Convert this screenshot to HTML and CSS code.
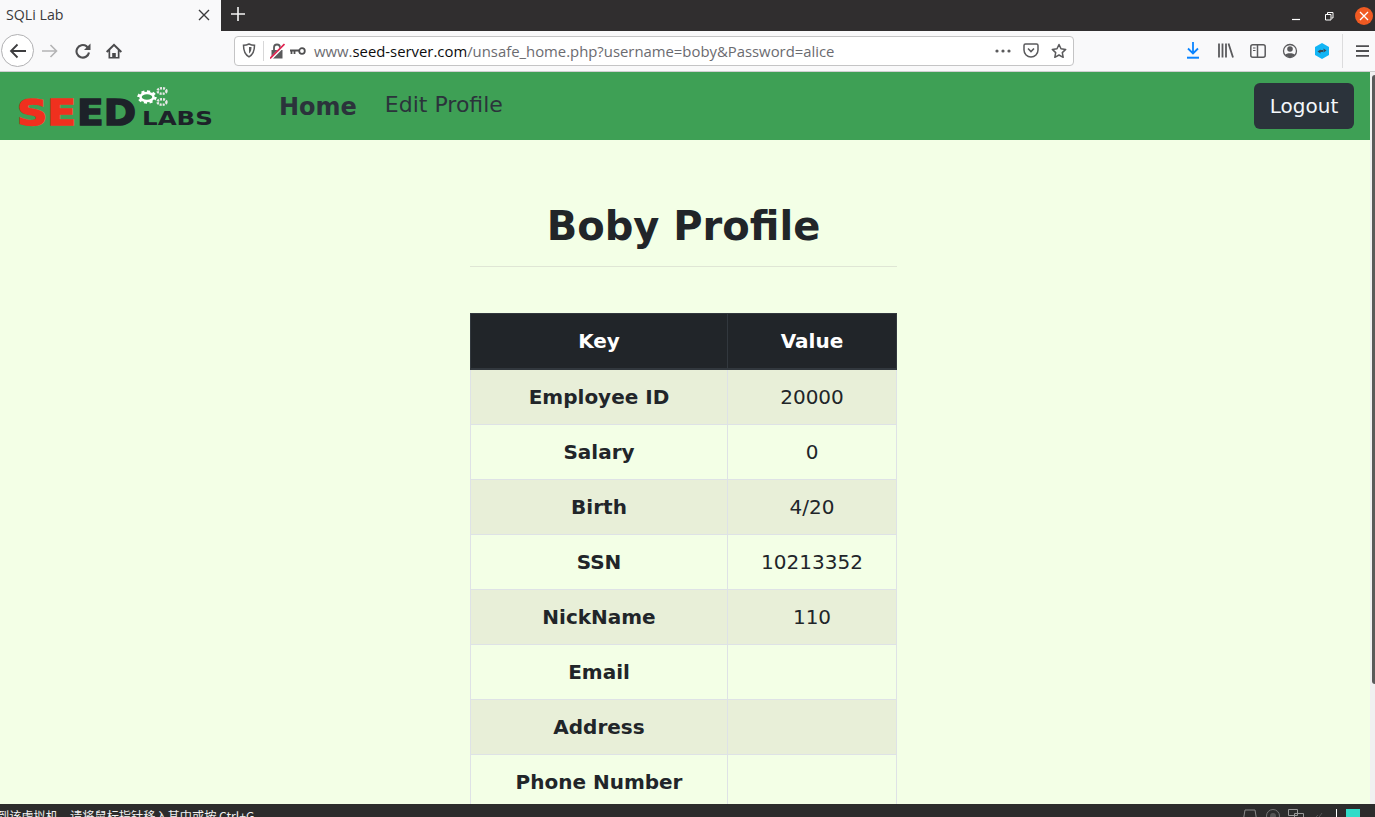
FILE: index.html
```html
<!DOCTYPE html>
<html>
	<head>
		<title>SQLi Lab</title>
		<meta charset="utf-8">
		<link rel="stylesheet" href="styles.css">
	</head>
	<body>
		<div class="titlebar">
			<div class="tab">
				<span class="tab-title">SQLi Lab</span>
				<svg class="tab-close" width="12" height="12" viewBox="0 0 12 12"><path d="M1 1l10 10M11 1L1 11" stroke="#3a3a3c" stroke-width="1.4" fill="none"/></svg>
			</div>
			<svg class="new-tab" width="14" height="14" viewBox="0 0 14 14"><path d="M7 0v14M0 7h14" stroke="#f4f4f4" stroke-width="1.6" fill="none"/></svg>
			<div class="window-controls">
				<svg width="10" height="10" viewBox="0 0 10 10"><path d="M1 8.500h8" stroke="#fff" stroke-width="1.200"/></svg>
				<svg width="10" height="10" viewBox="0 0 10 10"><path d="M1.500 3.500h5.500v5.500H1.500zM3.500 3V1.500H9V7H7.500" stroke="#fff" stroke-width="1" fill="none"/></svg>
				<div class="close-circle">
					<svg width="10" height="10" viewBox="0 0 10 10"><path d="M1 1l8 8M9 1L1 9" stroke="#fff" stroke-width="1.300" fill="none"/></svg>
				</div>
			</div>
		</div>

		<div class="toolbar">
			<div class="back-btn">
				<svg width="18" height="16" viewBox="0 0 18 16"><path d="M17 8H2M8.500 1.500L2 8l6.500 6.500" stroke="#3d3d3f" stroke-width="1.800" fill="none"/></svg>
			</div>
			<svg class="forward" width="16" height="14" viewBox="0 0 16 14"><path d="M0 7h14M8.500 1l6 6-6 6" stroke="#b4b4b5" stroke-width="1.600" fill="none"/></svg>
			<svg class="reload" width="16" height="16" viewBox="0 0 16 16"><path d="M14 9.500A6.300 6.300 0 1 1 11.500 3.200L13.500 5.500" stroke="#4f4f51" stroke-width="2.100" fill="none"/><path d="M15.500 .5v6.500H9z" fill="#4f4f51"/></svg>
			<svg class="home" width="16" height="16" viewBox="0 0 16 16"><path d="M8 .5L0 8.300l1.300 1.400 1.200-1.100V15.500h11V8.600l1.200 1.100L16 8.300zM11.800 14H9.800V10H6.200v4H4.200V7L8 3.300 11.800 7z" fill="#4a4a4c"/></svg>

			<div class="urlbar">
				<svg class="shield" width="14" height="15" viewBox="0 0 14 15"><path d="M7 1c2 1 3.500 1.300 5.500 1.300 0 5.500-1.500 9.500-5.500 11.500C3 11.800 1.500 7.800 1.500 2.300 3.500 2.300 5 2 7 1z" stroke="#5a5a5c" stroke-width="1.500" fill="none"/><path d="M7 4h2.500C9.500 7 9 9 7 10.500z" fill="#5a5a5c"/></svg>
				<div class="url-sep"></div>
				<svg class="lock" width="15" height="16" viewBox="0 0 15 16"><path d="M1.500 7h11v8.500h-11z" fill="#5a5a5c"/><path d="M4 7V4.500a3 3 0 0 1 6 0V7" fill="none" stroke="#5a5a5c" stroke-width="1.800"/><path d="M0 16.500L15 1.500" stroke="#fff" stroke-width="3"/><path d="M0 15.500L14.500 1" stroke="#e0224f" stroke-width="1.700"/></svg>
				<svg class="key" width="16" height="8" viewBox="0 0 16 8"><circle cx="12" cy="4" r="2.800" stroke="#4f4f51" stroke-width="1.800" fill="none"/><path d="M9 3.500H0M1.500 3.500v3.500M4.500 3.500v3.500" stroke="#4f4f51" stroke-width="1.800" fill="none"/></svg>
				<div class="url-text">www.<b>seed-server.com</b>/unsafe_home.php?username=boby&amp;Password=alice</div>
				<svg class="dots" width="16" height="4" viewBox="0 0 16 4"><circle cx="2" cy="2" r="1.600" fill="#5a5a5c"/><circle cx="8" cy="2" r="1.600" fill="#5a5a5c"/><circle cx="14" cy="2" r="1.600" fill="#5a5a5c"/></svg>
				<svg class="pocket" width="16" height="15" viewBox="0 0 16 15"><path d="M2.500 1h11A1.500 1.500 0 0 1 15 2.500V7A7 7 0 0 1 1 7V2.500A1.500 1.500 0 0 1 2.500 1z" stroke="#5a5a5c" stroke-width="1.500" fill="none"/><path d="M5 5.500l3 3 3-3" stroke="#5a5a5c" stroke-width="1.600" fill="none"/></svg>
				<svg class="star" width="16" height="16" viewBox="0 0 16 16"><path d="M8 1.500l2 4.300 4.700.6-3.400 3.200.9 4.700L8 12l-4.200 2.300.9-4.700L1.300 6.400 6 5.800z" stroke="#5a5a5c" stroke-width="1.500" fill="none" stroke-linejoin="round"/></svg>
			</div>

			<div class="tools">
				<svg width="14" height="17" viewBox="0 0 14 17"><path d="M7 0v11M2 6.500l5 5 5-5" stroke="#0a84ff" stroke-width="1.800" fill="none"/><path d="M1 15.700h12" stroke="#0a84ff" stroke-width="2"/></svg>
				<svg class="tool-library" width="16" height="15" viewBox="0 0 16 15"><path d="M1 0.500V14.500M4.500 0.500V14.500M8 0.500V14.500M10.500 0.500L15 14.500" stroke="#5a5a5c" stroke-width="1.800" fill="none"/></svg>
				<svg width="16" height="14" viewBox="0 0 16 14"><rect x=".8" y=".8" width="14.400" height="12.400" rx="2" stroke="#5a5a5c" stroke-width="1.500" fill="none"/><path d="M7.500 1v12" stroke="#5a5a5c" stroke-width="1.500"/><path d="M3 4h2.500M3 6.500h2.500" stroke="#5a5a5c" stroke-width="1.200"/></svg>
				<svg width="16" height="16" viewBox="0 0 16 16"><circle cx="8" cy="8" r="6.500" stroke="#5a5a5c" stroke-width="1.300" fill="none"/><circle cx="8" cy="6" r="2.800" fill="#5a5a5c"/><path d="M3 12c1-2.500 9-2.500 10 0-2 2.700-8 2.700-10 0z" fill="#5a5a5c"/></svg>
				<svg width="16" height="16" viewBox="0 0 16 16"><path d="M8 0l7 4v8l-7 4-7-4V4z" fill="#12b5f5"/><path d="M3.500 8.500l3-2v4zM12.500 7.500l-3-2v4zM6 7h4v2H6z" fill="#3a4a55"/></svg>
				<div class="tool-sep"></div>
				<svg class="tool-menu" width="13" height="12" viewBox="0 0 13 12"><path d="M0 1.100h13M0 6h13M0 10.900h13" stroke="#4f4f51" stroke-width="1.800"/></svg>
			</div>
		</div>

		<div class="viewport">
			<div class="page">
				<nav class="navbar">
					<svg class="logo" width="197" height="52" viewBox="0 0 197 52">
						<text class="logo-seed logo-red" x="0" y="45" textLength="59" lengthAdjust="spacingAndGlyphs">SE</text>
						<text class="logo-seed logo-dark" x="60" y="45" textLength="59" lengthAdjust="spacingAndGlyphs">ED</text>
						<text class="logo-labs" x="125" y="45" textLength="71" lengthAdjust="spacingAndGlyphs">LABS</text>
						<ellipse class="gear-teeth" cx="130" cy="17" rx="8.500" ry="5.500"/>
						<ellipse class="gear-ring" cx="130" cy="17" rx="6.500" ry="4"/>
						<ellipse class="gear-small" cx="145" cy="11" rx="4.500" ry="2.800"/>
						<ellipse class="gear-small" cx="145" cy="22" rx="4.500" ry="2.800"/>
					</svg>
					<a class="nav-home">Home</a>
					<a class="nav-edit">Edit Profile</a>
					<button class="logout">Logout</button>
				</nav>

				<main class="content">
					<h1 class="profile-title">Boby Profile</h1>
					<hr class="profile-rule">
					<table class="profile-table">
						<thead>
							<tr><th class="col-key">Key</th><th class="col-value">Value</th></tr>
						</thead>
						<tbody>
							<tr><th>Employee ID</th><td>20000</td></tr>
							<tr><th>Salary</th><td>0</td></tr>
							<tr><th>Birth</th><td>4/20</td></tr>
							<tr><th>SSN</th><td>10213352</td></tr>
							<tr><th>NickName</th><td>110</td></tr>
							<tr><th>Email</th><td></td></tr>
							<tr><th>Address</th><td></td></tr>
							<tr><th>Phone Number</th><td></td></tr>
						</tbody>
					</table>
				</main>
			</div>
			<div class="scrollbar"><div class="scroll-thumb"></div></div>
		</div>

		<div class="statusbar">
			<span class="status-text">到该虚拟机，请将鼠标指针移入其中或按 Ctrl+G。</span>
			<div class="status-icons">
				<svg width="16" height="13" viewBox="0 0 16 13"><path d="M1 13L3 1h10l2 12" stroke="#8a8a8a" fill="none"/></svg>
				<svg width="14" height="13" viewBox="0 0 14 13"><circle cx="7" cy="7" r="6.500" stroke="#777" fill="none"/><circle cx="7" cy="7" r="3" fill="#555"/></svg>
				<svg width="16" height="13" viewBox="0 0 16 13"><path d="M.5.500h9v6h-9zM6.500 4.500h9v8h-9z" stroke="#999" fill="none"/></svg>
				<svg width="12" height="13" viewBox="0 0 12 13"><path d="M1 11L6 6M5 11l5-7" stroke="#555" fill="none"/></svg>
				<div class="status-line"></div>
				<div class="status-square"></div>
			</div>
		</div>
	</body>
</html>
```

FILE: styles.css
```css
html, body {
	height: 100%;
}

body {
	margin: 0;
	display: flex;
	flex-direction: column;
	overflow: hidden;
	background-color: #f3ffe6;
	font-family: "DejaVu Sans", sans-serif;
	color: #212529;
}

svg {
	display: block;
	flex-shrink: 0;
}

/* browser chrome */
.titlebar {
	display: flex;
	align-items: center;
	height: 31px;
	background-color: #302e2f;
	flex-shrink: 0;
}

.tab {
	display: flex;
	align-items: center;
	justify-content: space-between;
	box-sizing: border-box;
	width: 221px;
	height: 31px;
	padding: 0 11px 2px 6px;
	background-color: #f9f9fa;
}

.tab-title {
	font-family: "Open Sans", sans-serif;
	font-size: 14.200px;
	color: #3a3a3c;
}

.new-tab {
	margin-left: 10px;
	margin-bottom: 3px;
}

.window-controls {
	display: flex;
	align-items: center;
	gap: 23px;
	margin-left: auto;
	margin-right: 2px;
}

.close-circle {
	display: flex;
	align-items: center;
	justify-content: center;
	width: 18px;
	height: 18px;
	margin-left: -2px;
	border-radius: 50%;
	background-color: #f05a22;
}

.toolbar {
	display: flex;
	align-items: center;
	box-sizing: border-box;
	height: 41px;
	flex-shrink: 0;
	padding-bottom: 1px;
	background-color: #f9f9fa;
	border-bottom: 1px solid #cfcfd0;
}

.back-btn {
	display: flex;
	align-items: center;
	justify-content: center;
	box-sizing: border-box;
	width: 33px;
	height: 33px;
	margin-left: 1px;
	border: 1px solid #b1b1b3;
	border-radius: 50%;
	background-color: #fff;
}

.forward {
	margin-left: 8px;
}

.reload {
	margin-left: 17px;
}

.home {
	margin-left: 15px;
}

.urlbar {
	display: flex;
	align-items: center;
	box-sizing: border-box;
	flex-shrink: 0;
	width: 840px;
	height: 30px;
	margin-left: 112px;
	border: 1px solid #c4c4c5;
	border-radius: 4px;
	background-color: #fff;
}

.shield {
	margin-left: 7px;
}

.url-sep {
	width: 1px;
	height: 20px;
	margin-left: 7px;
	background-color: #d7d7d8;
}

.lock {
	margin-left: 6px;
}

.key {
	margin-left: 5px;
}

.url-text {
	margin-left: 8px;
	font-family: "Open Sans", sans-serif;
	font-size: 14.860px;
	color: #6b6b70;
	white-space: nowrap;
}

.url-text b {
	font-weight: 400;
	color: #0c0c0d;
}

.dots {
	margin-left: auto;
}

.pocket {
	margin-left: 12px;
}

.star {
	margin-left: 12px;
	margin-right: 6px;
}

.tools {
	display: flex;
	align-items: center;
	gap: 16px;
	margin-left: 112px;
}

.tool-library {
	margin-left: 2px;
}

.tool-sep {
	width: 1px;
	height: 34px;
	margin-left: -4px;
	background-color: #dcdcdd;
}

.tool-menu {
	margin-left: -3px;
}

/* page */
.viewport {
	display: flex;
	flex: 1;
	min-height: 0;
}

.page {
	flex: 1;
	min-width: 0;
	overflow: hidden;
}

.scrollbar {
	width: 5px;
	background-color: #f0f0f0;
}

.scroll-thumb {
	height: 609px;
	margin: 3px 0 0 2px;
	border-radius: 3px 0 0 3px;
	background-color: #5a5a5a;
}

.navbar {
	display: flex;
	align-items: center;
	height: 68px;
	padding: 0 16px 0 17px;
	background-color: #3ea055;
}

.nav-home {
	margin-left: 65px;
	margin-top: 2px;
	font-size: 24px;
	font-weight: bold;
	color: #2b333b;
}

.nav-edit {
	margin-left: 28px;
	margin-bottom: 4px;
	font-size: 22px;
	color: #2b333b;
}

.logout {
	width: 100px;
	height: 46px;
	margin-left: auto;
	padding: 0;
	border: none;
	border-radius: 6px;
	background-color: #2b333b;
	color: #f4f8fb;
	font-family: "DejaVu Sans", sans-serif;
	font-size: 20px;
}

.logo-seed {
	font-family: "DejaVu Sans", sans-serif;
	font-weight: bold;
	font-size: 36px;
	stroke-width: 1.500px;
}

.logo-red {
	fill: #f0301e;
	stroke: #f0301e;
}

.logo-dark {
	fill: #1d2229;
	stroke: #1d2229;
}

.logo-labs {
	font-family: "DejaVu Sans", sans-serif;
	font-weight: bold;
	font-size: 20px;
	fill: #1d2229;
}

.gear-teeth {
	fill: none;
	stroke: #fff;
	stroke-width: 2.500px;
	stroke-dasharray: 3 2.500;
}

.gear-ring {
	fill: none;
	stroke: #fff;
	stroke-width: 2.500px;
}

.gear-small {
	fill: none;
	stroke: #e8e8e8;
	stroke-width: 2.400px;
	stroke-dasharray: 2 1;
}

.content {
	display: flex;
	flex-direction: column;
	align-items: center;
	padding-right: 3px;
}

.profile-title {
	margin: 60px 0 0;
	font-size: 40px;
	line-height: 52px;
	font-weight: bold;
	color: #212529;
}

.profile-rule {
	box-sizing: border-box;
	width: 427px;
	height: 1px;
	margin: 14px 0 46px;
	border: none;
	background-color: #dfe6d5;
}

.profile-table {
	width: 427px;
	table-layout: fixed;
	border-collapse: collapse;
	font-size: 20px;
	line-height: 30px;
	text-align: center;
}

.profile-table th, .profile-table td {
	padding: 12px;
	border: 1px solid #dee2e6;
	font-weight: normal;
}

.profile-table th {
	font-weight: bold;
}

.profile-table thead th {
	border-color: #32383e;
	border-bottom-width: 2px;
	background-color: #212529;
	color: #fff;
}

.profile-table .col-key {
	box-sizing: border-box;
	width: 257px;
}

.profile-table tbody tr:nth-child(odd) {
	background-color: #e8efd8;
}

.statusbar {
	display: flex;
	height: 13px;
	flex-shrink: 0;
	overflow: hidden;
	background-color: #2c2c2c;
}

.status-text {
	margin-left: -3px;
	margin-top: 5px;
	font-family: "Noto Sans CJK SC", sans-serif;
	font-size: 12.200px;
	line-height: 14px;
	color: #f0f0f0;
	white-space: nowrap;
}

.status-icons {
	display: flex;
	gap: 8px;
	margin-left: auto;
	margin-right: 15px;
	padding-top: 5px;
}

.status-line {
	width: 1px;
	height: 13px;
	background-color: #fff;
	margin: 0 1px 0 4px;
}

.status-square {
	width: 14px;
	height: 9px;
	background-color: #30dcc8;
}
```
